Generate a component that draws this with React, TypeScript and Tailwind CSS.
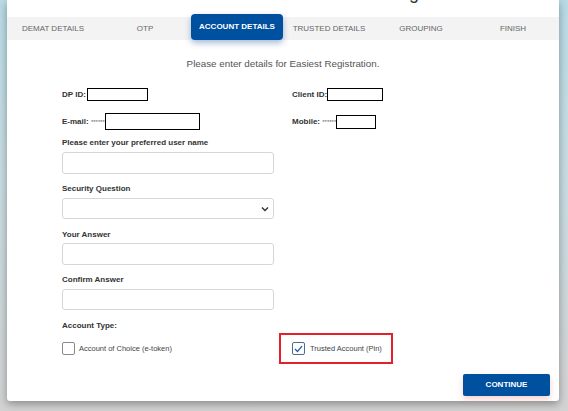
import React from "react";

const tabs = ["DEMAT DETAILS", "OTP", "ACCOUNT DETAILS", "TRUSTED DETAILS", "GROUPING", "FINISH"];

function Label({ children, className = "" }: { children: React.ReactNode; className?: string }) {
  return (
    <div className={`text-[8px] leading-[10px] font-bold text-[#333] ${className}`}>{children}</div>
  );
}

export default function App() {
  return (
    <div
      className="w-[568px] h-[411px] overflow-hidden bg-[linear-gradient(180deg,#b9dce6_0%,#c9dde2_45%,#d3d3d3_100%)]"
      style={{ fontFamily: '"Liberation Sans", Arial, sans-serif' }}
    >
      <div className="ml-[7px] w-[552px] h-[401px] bg-white rounded-b-[3px] shadow-[0_3px_8px_rgba(0,0,0,0.35)] flex flex-col">
        {/* clipped title */}
        <div className="h-[17px] overflow-hidden">
          <div className="text-[18px] leading-[18px] text-[#333] mt-[-16px] pl-[402px]">g</div>
        </div>
        {/* tabs */}
        <div className="h-[23px] bg-[#f3f3f3] flex">
          {tabs.map((t) =>
            t === "ACCOUNT DETAILS" ? (
              <div
                key={t}
                className="w-[92px] h-[26px] mt-[-3px] bg-[#0050a0] rounded-[4px] shadow-[0_3px_6px_rgba(0,60,140,0.35)] flex items-center justify-center text-white text-[8px] font-bold"
              >
                {t}
              </div>
            ) : (
              <div key={t} className="w-[92px] h-[23px] flex items-center justify-center text-[#666] text-[8px]">
                {t}
              </div>
            )
          )}
        </div>
        {/* content */}
        <div className="mt-[18px] text-center text-[9.8px] leading-[12px] text-[#555]">
          Please enter details for Easiest Registration.
        </div>
        <div className="pl-[55px] flex flex-col">
          <div className="mt-[18px] flex items-center h-[13px]">
            <div className="w-[230px] flex items-center">
              <Label>DP ID:</Label>
              <div className="ml-[1px] w-[61px] h-[13px] border border-black bg-white" />
            </div>
            <div className="flex items-center">
              <Label>Client ID:</Label>
              <div className="w-[56px] h-[13px] border border-black bg-white" />
            </div>
          </div>
          <div className="mt-[12px] flex items-center h-[17px]">
            <div className="w-[230px] flex items-center">
              <Label>
                E-mail: <span className="font-normal text-[6px] text-[#666]">******</span>
              </Label>
              <div className="w-[95px] h-[17px] border border-black bg-white" />
            </div>
            <div className="flex items-center">
              <Label>
                Mobile: <span className="font-normal text-[6px] text-[#666]">******</span>
              </Label>
              <div className="w-[40px] h-[14px] border border-black bg-white" />
            </div>
          </div>

          <Label className="mt-[8px]">Please enter your preferred user name</Label>
          <div className="mt-[4px] w-[212px] h-[22px] border border-[#d6d6d6] rounded-[3px]" />

          <Label className="mt-[10px]">Security Question</Label>
          <div className="mt-[4px] w-[212px] h-[21px] border border-[#d6d6d6] rounded-[3px] flex items-center justify-end pr-[4px]">
            <svg width="8" height="6" viewBox="0 0 8 6" fill="none">
              <path d="M1 1.5 L4 4.5 L7 1.5" stroke="#333" strokeWidth="1.4" />
            </svg>
          </div>

          <Label className="mt-[11px]">Your Answer</Label>
          <div className="mt-[3px] w-[212px] h-[22px] border border-[#d6d6d6] rounded-[3px]" />

          <Label className="mt-[10px]">Confirm Answer</Label>
          <div className="mt-[4px] w-[212px] h-[21px] border border-[#d6d6d6] rounded-[3px]" />

          <Label className="mt-[11px]">Account Type:</Label>
          <div className="mt-[2px] flex items-center h-[31px]">
            <div className="w-[217px] flex items-center">
              <div className="w-[13px] h-[13px] border border-[#8a8a8a] rounded-[2px] bg-white" />
              <div className="ml-[4px] text-[7.5px] text-[#444]">Account of Choice (e-token)</div>
            </div>
            <div className="w-[114px] h-[31px] border-2 border-[#e3202b] flex items-center pl-[11px]">
              <div className="w-[13px] h-[13px] border border-[#4b6b92] rounded-[2px] bg-white flex items-center justify-center">
                <svg width="9" height="8" viewBox="0 0 9 8" fill="none">
                  <path d="M1 4 L3.5 6.5 L8 1.2" stroke="#1f5fa6" strokeWidth="1.3" />
                </svg>
              </div>
              <div className="ml-[5px] text-[7.5px] text-[#444]">Trusted Account (Pin)</div>
            </div>
          </div>
        </div>
        <div className="mt-[10px] flex justify-end pr-[9px]">
          <div className="w-[87px] h-[22px] bg-[#0050a0] rounded-[2px] shadow-[0_3px_6px_rgba(230,120,120,0.35)] flex items-center justify-center text-white text-[8px] font-bold">
            CONTINUE
          </div>
        </div>
      </div>
    </div>
  );
}
